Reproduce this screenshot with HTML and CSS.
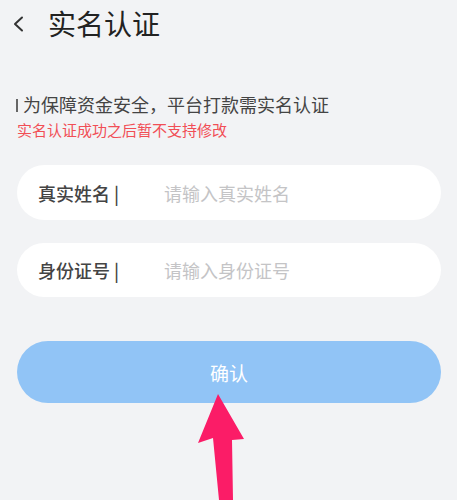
FILE: index.html
```html
<!DOCTYPE html>
<html lang="zh-CN">
<head>
<meta charset="utf-8">
<link rel="stylesheet" href="styles.css">
</head>
<body>
<div class="page">
  <header class="header">
    <svg class="back" width="11" height="16" viewBox="0 0 11 16"><path d="M9 1.5 L2 8 L9 14.5" fill="none" stroke="#333" stroke-width="2" stroke-linecap="round" stroke-linejoin="round"/></svg>
    <h1 class="title">实名认证</h1>
  </header>
  <section class="notice">
    <p class="notice-main"><span class="bar"></span>为保障资金安全，平台打款需实名认证</p>
    <p class="notice-warn">实名认证成功之后暂不支持修改</p>
  </section>
  <form class="form">
    <label class="field">
      <span class="field-label">真实姓名 |</span>
      <input class="field-input" type="text" placeholder="请输入真实姓名">
    </label>
    <label class="field">
      <span class="field-label">身份证号 |</span>
      <input class="field-input" type="text" placeholder="请输入身份证号">
    </label>
    <button class="confirm" type="button">确认</button>
  </form>
  <svg class="arrow" width="457" height="500" viewBox="0 0 457 500"><polygon points="218,394 244,439 232,440 233,500 219,500 213,438 198,443" fill="#fb1c67"/></svg>
</div>
</body>
</html>
```
FILE: styles.css
```css
* { box-sizing: border-box; }
html, body {
  margin: 0;
  padding: 0;
  background: #f2f3f5;
}
body {
  font-family: "Noto Sans CJK SC", "Noto Sans", sans-serif;
  color: #333;
}
.page {
  position: relative;
  width: 457px;
  height: 500px;
  overflow: hidden;
  padding: 0 16px 0 17px;
}
.header {
  height: 46px;
  display: flex;
  align-items: center;
  margin-left: -4px;
}
.back {
  display: block;
  margin-top: 2px;
}
.title {
  margin: 0 0 0 24px;
  font-size: 28px;
  font-weight: 400;
  color: #222;
  line-height: 46px;
}
.notice {
  margin-top: 45px;
}
.notice p {
  margin: 0;
}
.notice-main {
  font-size: 18px;
  line-height: 26px;
  color: #444;
  display: flex;
  align-items: center;
}
.bar {
  display: inline-block;
  width: 2px;
  height: 13px;
  background: #666;
  margin: 2px 5px 0 -1px;
}
.notice-warn {
  margin-top: 2px !important;
  font-size: 15px;
  line-height: 22px;
  color: #f14e55;
}
.form {
  margin-top: 24px;
  display: flex;
  flex-direction: column;
}
.field {
  height: 55px;
  border-radius: 28px;
  background: #fff;
  display: flex;
  align-items: center;
  padding-left: 21px;
  margin-bottom: 23px;
}
.field:nth-child(2) {
  height: 54px;
  margin-bottom: 44px;
}
.field-label {
  width: 126px;
  flex: none;
  font-size: 18px;
  font-weight: 500;
  color: #444;
}
.field-input {
  border: 0;
  outline: 0;
  background: transparent;
  font: inherit;
  font-size: 18px;
  color: #333;
  padding: 0;
  flex: 1;
  min-width: 0;
}
.field-input::placeholder {
  color: #c4c4c6;
}
.confirm {
  height: 62px;
  border: 0;
  border-radius: 31px;
  background: #91c4f6;
  color: #fff;
  font: inherit;
  font-size: 19px;
  padding: 0;
}
.arrow {
  position: absolute;
  left: 0;
  top: 0;
  pointer-events: none;
}
```
